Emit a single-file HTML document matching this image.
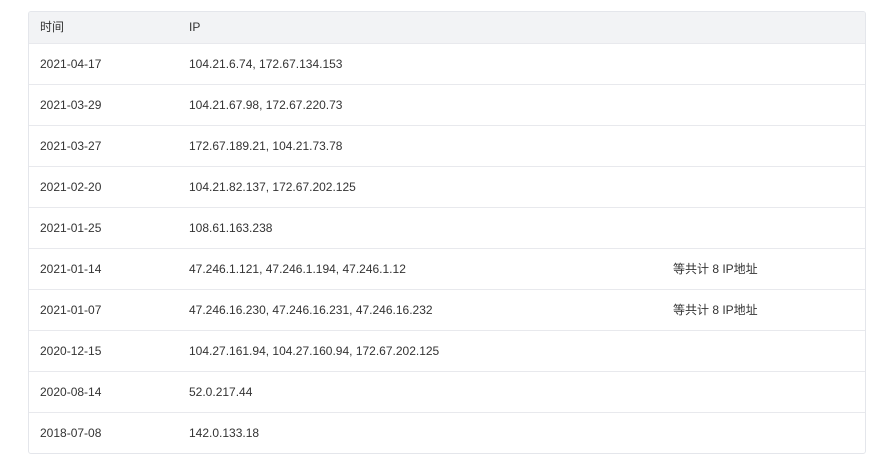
<!DOCTYPE html><html><head><style>
body{margin:0;background:#fff;font-family:"Liberation Sans","Noto Sans CJK SC",sans-serif;font-size:12px;color:#333;}
.t{position:absolute;left:28px;top:11px;width:836px;border:1px solid #e4e6eb;border-radius:3px;overflow:hidden;}
.r{position:relative;height:40px;border-top:1px solid #e8e9ed;}
.h{height:31px;background:#f2f3f5;border-top:none;}
.r span{position:absolute;top:0;line-height:40px;}
.h span{line-height:31px;}
.a{left:11px}.b{left:160px}.c{left:644px}
</style></head><body><div class="t">
<div class="r h"><span class="a">时间</span><span class="b">IP</span></div>
<div class="r"><span class="a">2021-04-17</span><span class="b">104.21.6.74, 172.67.134.153</span></div>
<div class="r"><span class="a">2021-03-29</span><span class="b">104.21.67.98, 172.67.220.73</span></div>
<div class="r"><span class="a">2021-03-27</span><span class="b">172.67.189.21, 104.21.73.78</span></div>
<div class="r"><span class="a">2021-02-20</span><span class="b">104.21.82.137, 172.67.202.125</span></div>
<div class="r"><span class="a">2021-01-25</span><span class="b">108.61.163.238</span></div>
<div class="r"><span class="a">2021-01-14</span><span class="b">47.246.1.121, 47.246.1.194, 47.246.1.12</span><span class="c">等共计 8 IP地址</span></div>
<div class="r"><span class="a">2021-01-07</span><span class="b">47.246.16.230, 47.246.16.231, 47.246.16.232</span><span class="c">等共计 8 IP地址</span></div>
<div class="r"><span class="a">2020-12-15</span><span class="b">104.27.161.94, 104.27.160.94, 172.67.202.125</span></div>
<div class="r"><span class="a">2020-08-14</span><span class="b">52.0.217.44</span></div>
<div class="r"><span class="a">2018-07-08</span><span class="b">142.0.133.18</span></div>
</div></body></html>
